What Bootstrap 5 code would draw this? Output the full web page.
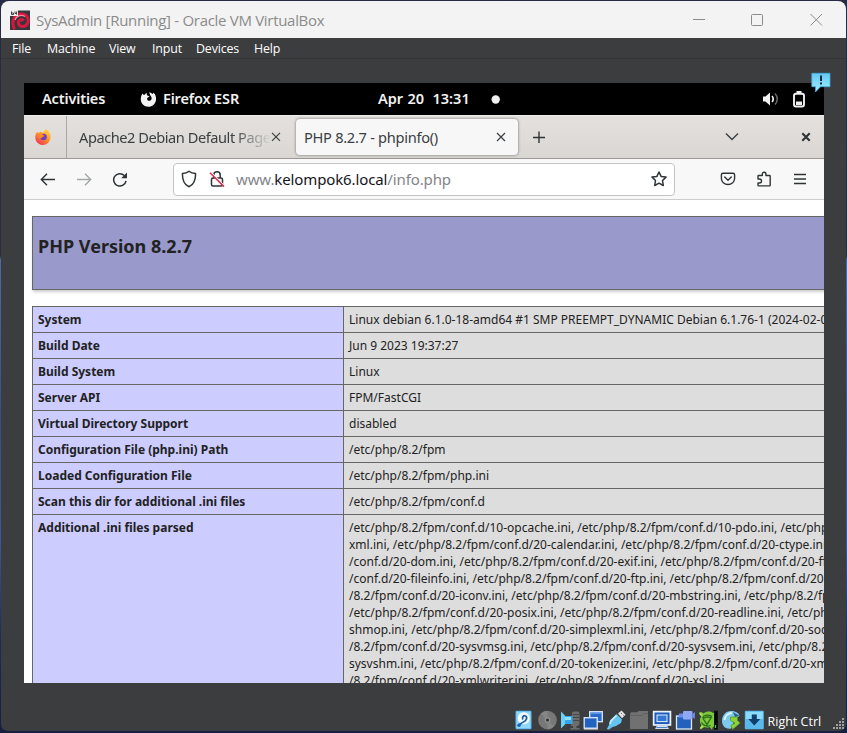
<!DOCTYPE html>
<html lang="en">
<head>
<meta charset="utf-8">
<title>SysAdmin [Running] - Oracle VM VirtualBox</title>
<meta name="viewport" content="width=device-width, initial-scale=1">
<link href="https://cdn.jsdelivr.net/npm/bootstrap@5.3.0/dist/css/bootstrap.min.css" rel="stylesheet">
<style>
body{width:847px;height:733px;overflow:hidden;background:linear-gradient(#262a44 0,#2b2f42 256px,#4a6aac 260px,#33508c 420px,#3a58a0 540px,#1b2b62 640px,#171f40 100%);font-family:"Noto Sans",sans-serif;color:#232629}
svg{display:block;flex:none}
.vm-window{width:845px;height:730px;margin:1px 0 0 1px;border-radius:8px 8px 7px 7px;background:#3c3d3f;position:relative}
.vm-title{height:37px;background:#f3f3f3;color:#8b8b8b;padding-left:9px}
.caption-text{font:400 15px/20px "Open Sans",sans-serif;margin-left:6px;letter-spacing:-.3px}
.win-controls{margin-right:16px}
.vm-menu{height:21px;padding-left:11px;border-bottom:1px solid #333436;color:#fff;font:400 12.4px/22px "Open Sans",sans-serif;display:grid;grid-template-columns:35px 62px 43px 44px 58px 40px}
.vm-menu span{letter-spacing:-.15px}
.vm-screen{width:800px;height:600px;margin:24px 0 0 23px;background:#fff}
.gnome{height:32px;background:#000;color:#f2f2f2;font:600 14.5px/30px "Noto Sans",sans-serif;letter-spacing:-.15px;white-space:nowrap}
.activities{width:82px;margin-left:18px}
.app-name{width:215px;margin-left:6px}
.clock{width:113px;letter-spacing:0;word-spacing:.5px}
.battery{margin:0 18px 0 12px}
.tabs-strip{height:44px;background:linear-gradient(#e3e0de,#dad7d3);border-bottom:1px solid #9b9894;border-top:1px solid #f0eeec;color:#3b4043;font-size:14.6px}
.pin-tab{width:43px;padding-right:4px;border-right:1px solid #aaa7a4}
.tab-text{line-height:43px;white-space:nowrap;overflow:hidden}
.fade-end{width:192px;margin-left:12px;letter-spacing:-.45px;-webkit-mask-image:linear-gradient(90deg,#000 80%,transparent);mask-image:linear-gradient(90deg,#000 80%,transparent)}
.tab-live{width:222px;height:36px;margin:3px 0 0 15px;padding:0 12px 0 8px;background:#f7f7f7;border-radius:4px;box-shadow:0 0 3px rgba(0,0,0,.5)}
.tab-live .tab-text{line-height:36px;letter-spacing:-.28px}
.tab-add{margin-left:15px}
.strip-close{margin:0 13px 0 62px}
.toolbar{height:41px;background:#f8f8f8;border-bottom:1px solid #ccc;padding-left:16px}
.nav-keys{gap:20px}
.tool-keys{gap:20px;margin-left:45px}
.urlbox{width:502px;height:33px;margin-left:45px;padding:0 7px;background:#fff;border:1px solid #c4c4c6;border-radius:4px;color:#84848a;font-size:15px;letter-spacing:-.12px}
.urlbox b{font-weight:400;color:#15141a}
.insecure{margin:0 11px 0 12px}
.page{height:483px;padding:16px 0 0 8px}
.php-head{width:934px;height:74px;background:#99c;border:1px solid #666;box-shadow:1px 2px 3px #ccc;font-weight:700;font-size:18px;line-height:27px;padding:16px 5px;color:#222}
.info{width:934px;margin-top:16px;border-collapse:collapse;table-layout:fixed;font-size:12px;line-height:17px;color:#222}
.info th,.info td{border:1px solid #666;padding:4px 5px;vertical-align:top;white-space:nowrap}
.info th{width:311px;background:#ccf;font-weight:700}
.info td{background:#ddd}
.note{position:absolute;left:809px;top:71px}
.grip{position:absolute;right:1px;bottom:1px}
.vm-status{padding:26.500px 0 0 512.5px;gap:3.1px;color:#fff}
.hostkey{font:400 12.5px/23px "Open Sans",sans-serif;white-space:nowrap}
</style>
<script src="https://cdn.jsdelivr.net/npm/bootstrap@5.3.0/dist/js/bootstrap.bundle.min.js"></script>
</head>
<body>
<div class="vm-window overflow-hidden">
  <header class="vm-title d-flex align-items-center">
    <svg width="20" height="20" viewBox="0 0 20 20"><rect width="20" height="19.500" y=".5" fill="#35363b"/><path d="M4.500 19.500C1 12 3.500 4.500 11 4c6-.3 8.500 5 6.500 9.500-2 4-8 4-9-.2-.7-3 3-5 5.200-2.500" fill="none" stroke="#d8173f" stroke-width="3"/><path d="M5 10c1-4 6-6 10-3.500" fill="none" stroke="#f48aa0" stroke-width="1.300"/><rect width="8" height="6" fill="#eee"/><path d="M1.500 1.500v3h2v-1.500h-2M5 1.500v2h1.600M6.600 1.500v3.200" stroke="#333" stroke-width=".9" fill="none"/></svg>
    <span class="caption-text">SysAdmin [Running] - Oracle VM VirtualBox</span>
    <svg class="win-controls ms-auto" width="144" height="20" viewBox="0 0 144 20" fill="none" stroke="#8a8a8a"><path d="M7 9.500h12M124.500 4l11.500 11.500M136 4l-11.500 11.500"/><rect x="65.500" y="4.500" width="11" height="11" rx="1"/></svg>
  </header>
  <nav class="vm-menu">
    <span>File</span><span>Machine</span><span>View</span><span>Input</span><span>Devices</span><span>Help</span>
  </nav>
  <main class="vm-screen overflow-hidden">
    <div class="gnome d-flex">
      <span class="activities">Activities</span>
      <div class="d-flex align-items-center ms-3"><svg width="17" height="17" viewBox="0 0 17 17"><path d="M2.500 2.500 4 4.300 6.500 1.800 7 4.200l2.600 1.400-2.400 1.300c-.4 2.200 1 3 2.300 2.900 2.400-.2 3-3.300.8-5.300L9.200 1.200c1.400.2 2.600.9 3.400 1.900l1-1.300c2 1.800 2.800 4.400 2.400 7.200-.6 4-3.700 6.800-7.600 6.800-4.400 0-7.600-3.300-7.600-7.500C.8 6 1.500 4 2.500 2.500z" fill="#f2f2f2"/></svg></div>
      <span class="app-name">Firefox ESR</span>
      <span class="clock">Apr 20&nbsp; 13:31</span>
      <svg class="align-self-center me-auto" width="9" height="9" viewBox="0 0 9 9"><circle cx="4.700" cy="4.500" r="4.200" fill="#f2f2f2"/></svg>
      <svg class="align-self-center" width="18" height="16" viewBox="0 0 18 16"><path d="M1 5.500h2.500L8 1.500v13l-4.500-4H1z" fill="#f2f2f2"/><path d="M10 5c1.600 1.600 1.600 4.400 0 6" fill="none" stroke="#f2f2f2" stroke-width="1.700"/><path d="M13 2.500c3 3 3 8 0 11" fill="none" stroke="#666" stroke-width="1.600"/></svg>
      <svg class="battery align-self-center" width="14" height="17" viewBox="0 0 14 17"><path d="M4.500 0h5v2.500h-5z" fill="#f2f2f2"/><rect x="2" y="2.800" width="10" height="12.700" rx="2" fill="none" stroke="#f2f2f2" stroke-width="1.900"/><path d="M4 10.500h6V14H4z" fill="#f2f2f2"/></svg>
    </div>
    <div class="tabs-strip d-flex">
      <div class="pin-tab d-flex align-items-center justify-content-center">
        <svg width="16" height="16" viewBox="0 0 16 16"><defs><linearGradient id="ff" x1=".9" y1="0" x2=".2" y2="1"><stop offset="0" stop-color="#ffe14a"/><stop offset=".45" stop-color="#ff9a1f"/><stop offset="1" stop-color="#f0305c"/></linearGradient></defs><path d="M2 3l1.500 1L6 2.500 8 4l3-4c3.500 2 5 5 4.600 8.500C15.200 12.800 12 16 8 16S.5 12.900.3 8.700C.2 6.500 1 4.500 2 3z" fill="url(#ff)"/><circle cx="8.500" cy="8" r="3.300" fill="#6b3fc4"/><path d="M3 5c2-1 4-.4 5 .9L10 7 7 8.200C6.600 10 4 9.500 3.500 8z" fill="#ff8a1f"/></svg>
      </div>
      <span class="tab-text fade-end">Apache2 Debian Default Page</span>
      <svg class="align-self-center" width="10" height="10" viewBox="0 0 10 10"><path d="M1 .8l8 8M9 .8l-8 8" stroke="#3b4043" stroke-width="1.200"/></svg>
      <div class="tab-live d-flex align-items-center justify-content-between">
        <span class="tab-text">PHP 8.2.7 - phpinfo()</span>
        <svg width="10" height="10" viewBox="0 0 10 10"><path d="M1 1l8 8M9 1l-8 8" stroke="#3b4043" stroke-width="1.200"/></svg>
      </div>
      <svg class="tab-add align-self-center" width="12" height="12" viewBox="0 0 12 12"><path d="M0 6.500h12M6 .5v12" stroke="#2e3436" stroke-width="1.400"/></svg>
      <svg class="align-self-center ms-auto" width="14" height="10" viewBox="0 0 14 10"><path d="M1 1.500l6 6 6-6" fill="none" stroke="#3b4043" stroke-width="1.400"/></svg>
      <svg class="strip-close align-self-center" width="10" height="10" viewBox="0 0 10 10"><path d="M1.300 1.300l7.400 7.400M8.700 1.300L1.300 8.700" stroke="#2e3436" stroke-width="2.100"/></svg>
    </div>
    <div class="toolbar d-flex align-items-center">
      <div class="nav-keys d-flex">
        <svg width="16" height="16" viewBox="0 0 16 16" fill="none" stroke="#2e3436" stroke-width="1.400"><path d="M15 8.500H1.500M7 2.700L1.300 8.500 7 14.300"/></svg>
        <svg width="16" height="16" viewBox="0 0 16 16" fill="none" stroke="#a5a6a8" stroke-width="1.400"><path d="M1 8.500h13.500M9 2.700L14.700 8.500 9 14.300"/></svg>
        <svg width="16" height="16" viewBox="0 0 16 16" fill="none" stroke="#2e3436" stroke-width="1.500"><path d="M14 9.800A6.200 6.200 0 1 1 12.300 4.500"/><path d="M15 1.500v5.800H9.200z" fill="#2e3436" stroke="none"/></svg>
      </div>
      <div class="urlbox d-flex align-items-center">
        <svg width="16" height="18" viewBox="0 0 16 18" fill="none" stroke="#2e3436" stroke-width="1.500"><path d="M8 1.200c2 1.800 4.400 2.300 6.600 2.400C14.700 9.600 13.500 14.600 8 16.800 2.500 14.600 1.300 9.600 1.400 3.600 3.600 3.500 6 3 8 1.200z" stroke-linejoin="round"/></svg>
        <svg class="insecure" width="16" height="18" viewBox="0 0 16 18" fill="none" stroke="#2e3436" stroke-width="1.500"><rect x="2.500" y="8" width="11" height="8" rx="1.500"/><path d="M4.800 8V5a3.200 3.200 0 0 1 6.400 0v3"/><path d="M1.800 2.300l13.500 13.500" stroke="#fff" stroke-width="1.500"/><path d="M1 2.800l14 13.800" stroke="#e22850" stroke-width="1.500"/></svg>
        <span>www.<b>kelompok6.local</b>/info.php</span>
        <svg class="ms-auto" width="16" height="16" viewBox="0 0 16 16" fill="none" stroke="#2e3436" stroke-width="1.500" stroke-linejoin="round"><path d="M8 1l2.100 4.400 4.900.7-3.500 3.400.8 5L8 12.200 3.700 14.500l.8-5L1 6.100l4.900-.7z"/></svg>
      </div>
      <div class="tool-keys d-flex">
        <svg width="16" height="16" viewBox="0 0 16 16" fill="none" stroke="#2e3436" stroke-width="1.400"><path d="M3 2.200h10a1.600 1.600 0 0 1 1.600 1.600V7.500a6.600 6 0 0 1-13.200 0V3.800A1.600 1.600 0 0 1 3 2.200zM4.700 6l3.300 3.200L11.300 6" stroke-linejoin="round" stroke-linecap="round"/></svg>
        <svg width="16" height="16" viewBox="0 0 16 16" fill="none" stroke="#2e3436" stroke-width="1.400" stroke-linejoin="round"><path d="M2 8V5.200Q2 4.500 2.700 4.500H6.300V3a1.800 1.800 0 0 1 3.600 0v1.500h3.600q.7 0 .7.700v9q0 .7-.7.700H2.700Q2 14.900 2 14.200V12h1.500a2 2 0 0 0 0-4z"/></svg>
        <svg width="16" height="16" viewBox="0 0 16 16" stroke="#2e3436" stroke-width="1.300"><path d="M2 3.500h12M2 8h12M2 12.500h12"/></svg>
      </div>
    </div>
    <div class="page">
      <div class="php-head">PHP Version 8.2.7</div>
      <table class="info">
        <tr><th>System</th><td>Linux debian 6.1.0-18-amd64 #1 SMP PREEMPT_DYNAMIC Debian 6.1.76-1 (2024-02-0</td></tr>
        <tr><th>Build Date</th><td>Jun 9 2023 19:37:27</td></tr>
        <tr><th>Build System</th><td>Linux</td></tr>
        <tr><th>Server API</th><td>FPM/FastCGI</td></tr>
        <tr><th>Virtual Directory Support</th><td>disabled</td></tr>
        <tr><th>Configuration File (php.ini) Path</th><td>/etc/php/8.2/fpm</td></tr>
        <tr><th>Loaded Configuration File</th><td>/etc/php/8.2/fpm/php.ini</td></tr>
        <tr><th>Scan this dir for additional .ini files</th><td>/etc/php/8.2/fpm/conf.d</td></tr>
        <tr><th>Additional .ini files parsed</th><td>/etc/php/8.2/fpm/conf.d/10-opcache.ini, /etc/php/8.2/fpm/conf.d/10-pdo.ini, /etc/php<br>xml.ini, /etc/php/8.2/fpm/conf.d/20-calendar.ini, /etc/php/8.2/fpm/conf.d/20-ctype.ini<br>/conf.d/20-dom.ini, /etc/php/8.2/fpm/conf.d/20-exif.ini, /etc/php/8.2/fpm/conf.d/20-ff<br>/conf.d/20-fileinfo.ini, /etc/php/8.2/fpm/conf.d/20-ftp.ini, /etc/php/8.2/fpm/conf.d/20-<br>/8.2/fpm/conf.d/20-iconv.ini, /etc/php/8.2/fpm/conf.d/20-mbstring.ini, /etc/php/8.2/fpm<br>/etc/php/8.2/fpm/conf.d/20-posix.ini, /etc/php/8.2/fpm/conf.d/20-readline.ini, /etc/php<br>shmop.ini, /etc/php/8.2/fpm/conf.d/20-simplexml.ini, /etc/php/8.2/fpm/conf.d/20-sock<br>/8.2/fpm/conf.d/20-sysvmsg.ini, /etc/php/8.2/fpm/conf.d/20-sysvsem.ini, /etc/php/8.2<br>sysvshm.ini, /etc/php/8.2/fpm/conf.d/20-tokenizer.ini, /etc/php/8.2/fpm/conf.d/20-xml<br>/8.2/fpm/conf.d/20-xmlwriter.ini, /etc/php/8.2/fpm/conf.d/20-xsl.ini</td></tr>
      </table>
    </div>
  </main>
  <footer class="vm-status d-flex">
    <svg width="20" height="20" viewBox="0 0 20 20"><rect x="1.500" y=".7" width="16" height="18.600" rx="1.200" fill="#5cb8ee"/><rect x="2.500" y="1.700" width="14" height="16.600" fill="#8fd8fa"/><circle cx="9.800" cy="8.200" r="6" fill="#f4fbff"/><path d="M9 9.500c-1.500-2 .5-4.500 2.500-3.500 2.500 1.500.5 5-2 6-1.500.6-2.500 1.500-4 2.500" fill="none" stroke="#1c5fa8" stroke-width="1.700"/><circle cx="5" cy="15.300" r="1.700" fill="#1c5fa8"/></svg>
    <svg width="20" height="20" viewBox="0 0 20 20"><circle cx="10.500" cy="10" r="9.300" fill="#787878"/><path d="M10.500 10L4 3.500A9.300 9.300 0 0 1 10.500.7zM10.500 10l6.500 6.500a9.300 9.300 0 0 1-6.500 2.800z" fill="#868686"/><circle cx="10.500" cy="10" r="3" fill="#8f8f8f"/><circle cx="10.500" cy="10" r="1.500" fill="#303030"/></svg>
    <svg width="20" height="20" viewBox="0 0 20 20"><path d="M12 3.500q0-2 2-2h3q2.500 0 2.500 2V13q0 3-3 3v2h3v1.500h-9V18H13v-2h-2z" fill="#6d6d6d"/><path d="M13 4.500h6M13 7.500h6M13 10.500h6" stroke="#464646"/><path d="M1 1.500L5.500 6v8L1 18.500z" fill="#6fd0f4"/><path d="M5 6h7.500v8H5z" fill="#38a5e6"/><path d="M5 7h6v3H5z" fill="#8ee2fb"/></svg>
    <svg width="20" height="20" viewBox="0 0 20 20" stroke="#dceafc" stroke-width="1.300"><rect x="6.700" y="1.700" width="12.600" height="10" fill="#2a6bc8"/><path d="M7.400 3h11.200" stroke="#78aaf0"/><rect x="1.200" y="7.700" width="13" height="10.500" fill="#2363c0"/><path d="M1 19h14" stroke="#eee" stroke-width="1"/></svg>
    <svg width="20" height="20" viewBox="0 0 20 20"><path d="M12 3.500L15.500.5l4 4.300-3.500 3.400z" fill="#e5e5e5"/><path d="M15 3l.9.900M17 4.800l.9.900" stroke="#555"/><path d="M10.500 4l5.500 5.500-1 3.500-5 3c-2 1-3 .5-4.500 1.800L3 19.500.8 19l2-3.500c.7-2 .2-3.500 1.500-5.500z" fill="#67c3f0"/><path d="M10.500 5.500L5 11l-1 3" stroke="#c3f0ff" stroke-width="1.600" fill="none"/></svg>
    <svg width="20" height="20" viewBox="0 0 20 20"><path d="M1 4l1-1.800h6L9.500 1H19v18H1z" fill="#717171"/><path d="M1 5.500h12l2-2h4" stroke="#606060" fill="none"/></svg>
    <svg width="20" height="20" viewBox="0 0 20 20"><rect x=".8" y=".8" width="18.500" height="15" fill="#eaf2fc"/><rect x="2.500" y="2.500" width="15" height="11.600" fill="#1d5bb8"/><rect x="5" y="5" width="10" height="6.600" fill="#3477d2" stroke="#e4f0ff"/><path d="M5 15.500h10l2 3.500H3z" fill="#d2e0f0"/><path d="M4.500 17.500h11" stroke="#4c83c4"/></svg>
    <svg width="20" height="20" viewBox="0 0 20 20"><rect x="1.500" y="6" width="15" height="13" fill="#2361bd" stroke="#dceafc" stroke-width="1.300"/><rect x="8" y="1" width="9.500" height="8.500" rx="1" fill="#8fa8f4"/><path d="M17.500 4l2.300-2v7l-2.300-2zM4 3.500h4v4H4z" fill="#6f8df0"/></svg>
    <svg width="20" height="20" viewBox="0 0 20 20"><path d="M1 2.500q3-1.500 4.500 1c3-2.500 7-2.500 9.500-.5l3-1.500v16l-3-1-1 3-2.500-2.500c-2 .8-3.500.6-5 0L2 19.500l1.300-4.500C1.300 12 1.500 9 3.200 6.500z" fill="#7cc93c"/><path d="M4.500 8C6 5 11 4 14 6.500M5 8.500l4 6 4.500-7.500M5 8.500l4-1.500 4.500.3M3.500 12.500c1.500 3 5.500 4.500 9 3" stroke="#2b6a17" stroke-width="1.300" fill="none"/><path d="M1.500 3.500l2.500 2M2.500 18.500l2-2.500" stroke="#b6ee55" stroke-width="1.500"/><rect x="16.500" y="1.200" width="3" height="18" fill="#050805" stroke="#111"/><path d="M17.500 15v3" stroke="#36d43b" stroke-width="1.200"/></svg>
    <svg width="20" height="20" viewBox="0 0 20 20"><path d="M1 11C1 5 5 1 10 1c4 0 8 1.500 8.500 5L14 9l-4 9.500C4.500 19.500 1 16 1 11z" fill="#7fc9ec"/><path d="M3.500 10C4 6 7 3 11 3" stroke="#d8f5ff" stroke-width="2" fill="none"/><path d="M12 2l6.500 4-4.500 1z" fill="#2d6183"/><path d="M9.500 7h7v3.500l2.700 2.500-7.700 6.500-1.500-4 4-2.500-4.500-2.500z" fill="#8cd23a" stroke="#4d951f" stroke-width=".7"/></svg>
    <svg width="20" height="20" viewBox="0 0 20 20"><rect x=".8" y=".8" width="19" height="18.400" rx="1" fill="#5ab9ea"/><path d="M1.800 1.800h17V9h-17z" fill="#8bdcfa"/><path d="M7.800 4.500h5V9h3.500l-6 6.500-6-6.500h3.500z" fill="#113e6b"/></svg>
    <span class="hostkey">Right Ctrl</span>
  </footer>
  <svg class="note" width="21" height="22" viewBox="0 0 21 22"><defs><linearGradient id="nb" x2="0" y2="1"><stop stop-color="#63c8f3"/><stop offset="1" stop-color="#a2eeff"/></linearGradient></defs><path d="M1.800 1.300h18.200v13.400h-9.500L5.500 20V14.700H1.800z" fill="url(#nb)" stroke="#3ea9dc" stroke-width=".8"/><path d="M11 3.500v5.500M11 10.500v2" stroke="#0c2a3b" stroke-width="2"/></svg>
  <svg class="grip" width="12" height="12" viewBox="0 0 12 12" fill="#a0a0a0"><path d="M9 0h2v2H9zM9 3h2v2H9zM6 3h2v2H6zM9 6h2v2H9zM6 6h2v2H6zM3 6h2v2H3zM9 9h2v2H9zM6 9h2v2H6zM3 9h2v2H3zM0 9h2v2H0z"/></svg>
</div>
</body>
</html>
